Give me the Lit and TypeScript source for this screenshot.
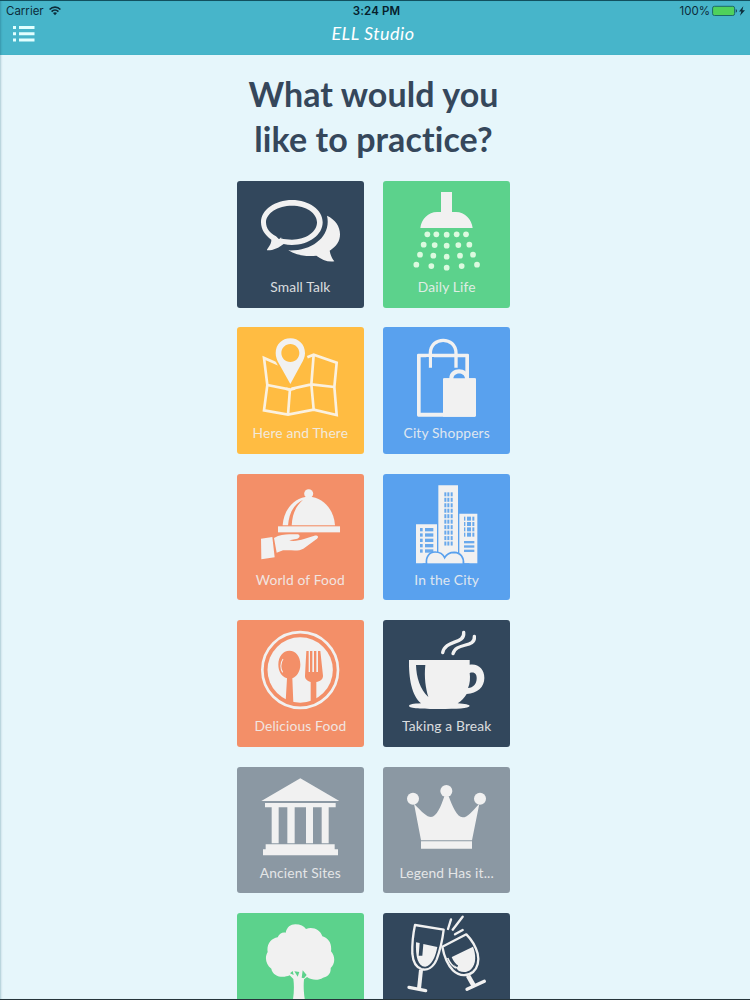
import { LitElement, html, svg, css } from "lit";
import { customElement, property } from "lit/decorators.js";
import { styleMap } from "lit/directives/style-map.js";

const NAVY = "#32475c";
const GREEN = "#5cd28c";
const YELLOW = "#ffbc42";
const BLUE = "#59a1ee";
const ORANGE = "#f38f68";
const GRAY = "#8b98a3";

const row = (y: number, xs: number[], dy: number[]) =>
  xs.map((x, i) => svg`<circle cx=${x} cy=${y + dy[i]} r="8.6"/>`);

const grid = (xs: number[][], y0: number, step: number, n: number, h: number) =>
  Array.from({ length: n }, (_, i) =>
    xs.map(([x, w]) => svg`<rect x=${x} y=${y0 + i * step} width=${w} height=${h}/>`));

const icons: Record<string, unknown> = {
  talk: svg`
    <path fill-rule="evenodd" d="M186 75C237 75 278 104 278 142C278 180 237 210 186 210C177 210 169 209 161 207C146 219 128 227 111 226C110 223 114 220 118 213C122 207 124 201 124 194C105 181 93 163 93 142C93 104 135 75 186 75ZM186 92C144 92 108 114 108 142C108 159 119 175 138 184L147 193L155 185L152 190C163 193 174 194 186 194C228 194 261 171 261 142C261 114 228 92 186 92Z"/>
    <path d="M291 122C316 134 330 154 330 178C330 199 319 215 299 227C301 240 306 250 313 259C293 262 275 254 259 242C228 246 197 240 175 226C247 229 305 183 291 122Z"/>`,
  shower: svg`
    <path d="M195 51H228V111H240C266 111 287 132 290 159H133C136 132 157 111 183 111H195Z"/>
    <g fill="#dcfadf">${row(178, [154, 181, 212, 242, 270], [0, 0, 1, 0, 0])}
    ${row(209, [143, 176, 212, 247, 280], [0, 1, 3, 1, 0])}
    ${row(239, [132, 172, 212, 252, 291], [0, 3, 6, 3, 0])}
    ${row(269, [121, 166, 212, 257, 303], [0, 4, 9, 4, 0])}</g>`,
  map: svg`
    <g fill="none" stroke="#fbf1df" stroke-width="8" stroke-linejoin="miter">
      <path d="M145 131L102 112L112 193L102 269L174 282L251 267L320 283L313 199L320 126L251 102L232 110"/>
      <path d="M112 193L177 206L244 191L313 199M180 204L174 282M251 102L244 191L251 267"/>
    </g>
    <path fill="#ffbc42" d="M136 120L181 206L228 110L220 90Z"/>
    <path fill="none" stroke="#fbf1df" stroke-width="8" d="M168 204L181 207L195 203"/>
    <path fill-rule="evenodd" d="M181 53C206 53 225 72 225 97C225 109 220 119 214 129L181 190L147 129C141 119 137 109 137 97C137 72 156 53 181 53ZM181 70C166 70 154 82 154 97S166 124 181 124S208 112 208 97S196 70 181 70Z"/>`,
  shop: svg`
    <path fill-rule="evenodd" d="M127 99H275Q279 99 279 103V173H296Q300 173 300 177V284Q300 288 296 288H127Q123 288 123 284V103Q123 99 127 99ZM134 110V276H201V177Q201 173 205 173H268V110Z"/>
    <path fill="none" stroke="#f1f1f1" stroke-width="10" d="M163 141V98C163 46 240 46 240 98V141"/>
    <path d="M201 177Q201 173 205 173H220C220 137 278 137 279 173H296Q300 173 300 177V284Q300 288 296 288H201Z"/>
    <path fill="#59a1ee" d="M232 173C234 154 265 154 267 173ZM151 109H158V141H151ZM168 109H174V141H168Z"/>`,
  cloche: svg`
    <circle cx="236" cy="79" r="13.5"/><path d="M229 86H243V95H229Z"/>
    <path d="M158 174C161 128 192 88 236 88S312 128 315 174Z"/>
    <path fill="#f38f68" d="M174 175C177 135 193 110 219 97C195 119 187 142 185 175Z"/>
    <rect x="144" y="177" width="186" height="18"/>
    <path d="M93 214L127 209L134 270L94 276ZM132 212C148 203 164 201 178 201H204C212 204 209 212 202 214L178 219C190 223 208 219 222 215L253 205C262 203 268 208 261 214L220 244C205 253 182 247 159 249L140 256Z"/>`,
  city: svg`
    <path d="M120 171H183V288H120ZM187 54H246V288H187ZM250 139H304V288H250Z"/>
    <g fill="#69a9ec">
      ${grid([[205, 6], [214, 6], [224, 6]], 75, 16.4, 10, 12)}
      ${grid([[132, 8], [147, 25]], 182, 16, 5, 10)}
      ${grid([[264, 4], [273, 12], [289, 6]], 148, 16, 4, 12)}
      ${grid([[264, 31]], 221, 13, 3, 7)}
    </g>
    <path fill="#f1f1f1" stroke="#59a1ee" stroke-width="5" d="M152 290C148 269 160 254 177 254C190 254 201 260 206 271C213 258 224 255 235 255C254 256 265 272 262 290"/>
    <rect x="140" y="288" width="140" height="8" fill="#59a1ee"/>`,
  plate: svg`
    <circle cx="210.500" cy="168" r="113.500" fill="none" stroke="#f1f1f1" stroke-width="8"/>
    <circle cx="210.500" cy="168" r="98"/>
    <g fill="#f38f68">
      <path d="M178 110C198 110 211 127 211 152C211 171 201 187 187 193L190 267L167 261L171 193C154 187 145 171 145 152C145 127 159 110 178 110Z"/>
      <path d="M229 111H236V174H240V111H247V174H252V111H259V174H264V111H271L279 185C279 196 270 202 259 204V263L242 267V204C231 201 224 195 225 184Z"/>
    </g>
    <path fill="none" stroke="#f1f1f1" stroke-width="3" d="M159 135C150 148 151 165 158 175"/>`,
  cup: svg`
    <path d="M537 138H719V152C745 148 763 165 763 192C763 220 742 238 710 240C703 252 694 261 683 268C705 270 719 272 719 276C717 283 680 285 628 285S538 283 537 276C538 271 550 269 573 268C545 245 536 192 537 138Z"/>
    <path fill="#32475c" d="M558 153H586C582 190 587 223 595 249C570 226 559 190 558 153ZM719 177C733 172 741 180 740 194C739 211 730 220 714 222C720 208 721 192 719 177Z"/>
    <g fill="none" stroke="#f1f1f1" stroke-width="10" stroke-linecap="round"><path d="M701 55C705 92 646 76 638 116M733 67C737 103 677 84 669 119"/></g>`,
  temple: svg`
    <path d="M211 54L328 122H94ZM105 128H317V141H105ZM125 141H146V249H125ZM172 141H194V249H172ZM228 141H249V249H228ZM275 141H296V249H275ZM107 252H314V267H324V285H99V267H107Z"/>`,
  crown: svg`
    <circle cx="549" cy="115" r="18"/><circle cx="649" cy="92" r="18"/><circle cx="750" cy="115" r="18"/>
    <path d="M552 130C576 155 591 170 603 170C620 170 633 138 643 108H656C667 138 681 171 698 171C713 171 724 155 748 130L726 240H573ZM573 243H726V265H573Z"/>`,
  tree: svg`
    <path d="M196 54C211 54 222 60 228 68C249 60 271 71 277 90C296 96 306 111 303 135C317 151 315 173 302 185C303 203 292 212 279 214C264 224 244 221 231 212L222 219C220 240 221 260 226 290H187C192 266 193 239 190 218L179 207C157 217 128 210 124 187C106 174 104 151 113 137C109 115 123 96 143 93C148 81 157 77 167 79C171 62 181 54 196 54Z"/>
    <path fill="#5cd28c" d="M180 201L188 194L191 206ZM193 195L208 197L203 211ZM218 192L230 206L222 216L215 214Z"/>`,
  glasses: svg`
    <g fill="none" stroke="#f1f1f1" stroke-width="7" stroke-linejoin="round">
      <path d="M555 55L641 69C637 103 630 131 620 158C609 184 591 192 574 187C556 181 549 165 547 141C546 112 549 83 555 55Z"/>
      <path d="M709 83L637 120C642 148 652 173 669 191C690 211 714 208 729 196C743 184 748 162 743 141C737 119 725 99 709 83Z"/>
      <path d="M573 189L567 246" stroke-width="12"/><path d="M537 242L587 252" stroke-width="10" stroke-linecap="round"/>
      <path d="M714 207L731 237" stroke-width="14"/><path d="M711 248L763 224" stroke-width="10" stroke-linecap="round"/>
      <path d="M663 38L654 67M698 30L668 69M698 70L675 83" stroke-width="7" stroke-linecap="round"/>
    </g>
    <path d="M558 107L569 109L566 147H577L580 112L622 121C617 150 605 177 586 180C564 181 556 150 558 107Z"/>
    <path d="M664 152L729 120C738 144 739 170 724 187C713 198 699 198 687 193C678 187 668 170 664 152Z"/>
    <path fill="none" stroke="#32475c" stroke-width="6" d="M662 152C669 168 676 175 683 179"/>
    <path fill="none" stroke="#f1f1f1" stroke-width="5" d="M653 154C659 168 667 178 678 184"/>`,
};

const tiles = [
  { name: "Small Talk", color: NAVY, icon: "talk", box: "21 18 380 380" },
  { name: "Daily Life", color: GREEN, icon: "shower", box: "21 18 380 380" },
  { name: "Here and There", color: YELLOW, icon: "map", box: "21 19 380 380" },
  { name: "City Shoppers", color: BLUE, icon: "shop", box: "21 19 380 380" },
  { name: "World of Food", color: ORANGE, icon: "cloche", box: "21 20 380 380" },
  { name: "In the City", color: BLUE, icon: "city", box: "21 20 380 380" },
  { name: "Delicious Food", color: ORANGE, icon: "plate", box: "21 18 380 380" },
  { name: "Taking a Break", color: NAVY, icon: "cup", box: "459 18 380 380" },
  { name: "Ancient Sites", color: GRAY, icon: "temple", box: "21 20 380 380" },
  { name: "Legend Has it...", color: GRAY, icon: "crown", box: "459 20 380 380" },
  { name: "", color: GREEN, icon: "tree", box: "21 20 380 380" },
  { name: "", color: NAVY, icon: "glasses", box: "459 19 380 380" },
];

@customElement("topic-tile")
class TopicTile extends LitElement {
  @property({ attribute: false }) topic!: (typeof tiles)[number];
  static styles = css`
    :host { display: block; }
    .tile { display: grid; width: 126.7px; height: 126.7px; border-radius: 3px; overflow: hidden; }
    .icon { grid-area: 1 / 1; width: 126.7px; height: 126.7px; fill: #f1f1f1; }
    .label { grid-area: 1 / 1; align-self: end; text-align: center; white-space: nowrap;
      padding-bottom: 11.7px; font: 400 13.8px/19px Lato, "Liberation Sans", sans-serif; letter-spacing: .15px;
      font-variant-ligatures: none; color: #f1f1f1; opacity: .88; }
  `;
  render() {
    const t = this.topic;
    return html`<div class="tile" style=${styleMap({ background: t.color })}>
      <svg class="icon" viewBox=${t.box}>${icons[t.icon]}</svg>
      <div class="label">${t.name}</div>
    </div>`;
  }
}

@customElement("app-root")
class AppRoot extends LitElement {
  static styles = css`
    :host { display: block; height: 1000px; overflow: hidden; }
    .screen { box-sizing: border-box; height: 1000px; overflow: hidden; background: #e6f6fb;
      border-top: 1px solid #12505f; border-bottom: 1px solid #26343a;
      box-shadow: inset 2px 0 2px -1px rgba(40, 100, 120, .3);
      font-family: Lato, "Liberation Sans", sans-serif; font-variant-ligatures: none; }
    .bar { height: 54px; background: #47b5ca; box-shadow: inset 2px 0 2px -1px rgba(20, 80, 100, .3); }
    .status { display: grid; grid-template-columns: 1fr auto 1fr; align-items: center; height: 19px;
      padding: 1px 4px 0 6px; box-sizing: border-box; font: 11.5px/18px Inter, sans-serif; color: #0c2c3a; }
    .carrier { display: flex; align-items: center; gap: 5px; }
    .time { font-weight: 600; color: #06202c; letter-spacing: .1px; padding-left: 1px; }
    .power { display: flex; align-items: center; justify-content: flex-end; gap: 2px; }
    .nav { display: grid; grid-template-columns: 1fr auto 1fr; align-items: center; height: 27px; padding: 0 0 0 12px; }
    .menu { display: block; }
    .title { font-size: 18px; font-style: italic; color: #fff; line-height: 27px; letter-spacing: .5px; padding-right: 16px; }
    h1 { margin: 16px 0 0; padding-right: 3px; text-align: center; font: 700 34px/45px Lato, sans-serif;
      font-variant-ligatures: none; letter-spacing: .1px; color: #35475b; }
    .tiles { display: grid; grid-template-columns: 126.7px 126.7px; gap: 19.7px; margin: 20px 0 0 237px; }
  `;
  render() {
    return html`<div class="screen">
      <div class="bar">
        <div class="status">
          <div class="carrier"><span>Carrier</span>
            <svg width="12" height="10" viewBox="0 0 12 10" fill="none" stroke="#0c2c3a" stroke-width="1.700">
              <path d="M.6 3.500C3.600 .3 8.400 .3 11.400 3.500M2.600 5.600C4.500 3.700 7.500 3.700 9.400 5.600"/>
              <path fill="#0c2c3a" stroke="none" d="M4 7C5.200 5.900 6.800 5.900 8 7L6 9.200Z"/>
            </svg></div>
          <div class="time">3:24 PM</div>
          <div class="power"><span>100%</span>
            <svg width="34" height="12" viewBox="0 0 34 12">
              <rect x=".6" y="1.300" width="22" height="9.200" rx="1.800" fill="#4fd15c" stroke="#1c6a68"/>
              <path fill="#0c2c3a" d="M23.800 4C25.200 4.500 25.200 7.300 23.800 7.800ZM31.300 1.300L27 6.600H29.300L28 10.700L33 5.200H30.400Z"/>
            </svg></div>
        </div>
        <div class="nav">
          <svg class="menu" width="24" height="18" viewBox="0 0 24 18" fill="#e2ffff">
            <path d="M1 1H4V4H1ZM7 1H22.500V4H7ZM1 7.200H4V10.200H1ZM7 7.200H22.500V10.200H7ZM1 13.500H4V16.500H1ZM7 13.500H22.500V16.500H7Z"/>
          </svg>
          <div class="title">ELL Studio</div>
        </div>
      </div>
      <h1>What would you<br>like to practice?</h1>
      <div class="tiles">${tiles.map((t) => html`<topic-tile .topic=${t}></topic-tile>`)}</div>
    </div>`;
  }
}
